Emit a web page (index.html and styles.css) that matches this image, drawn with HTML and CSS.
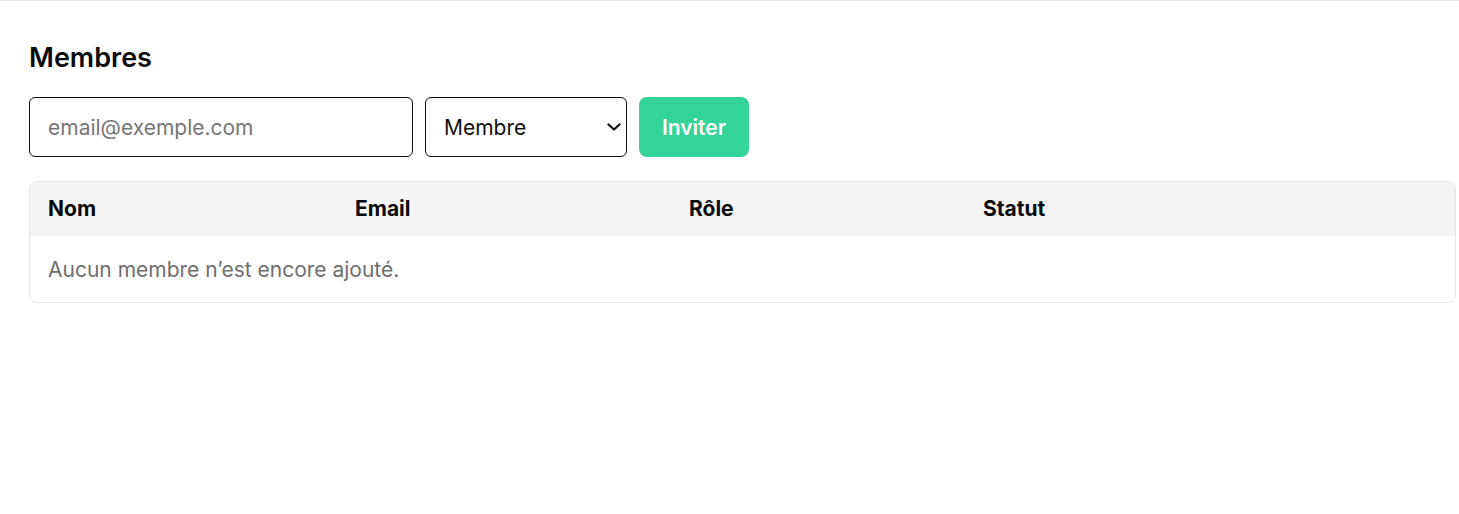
FILE: index.html
```html
<!DOCTYPE html>
<html lang="fr">
<head>
<meta charset="utf-8">
<title>Membres</title>
<link rel="stylesheet" href="styles.css">
</head>
<body>
<div class="topbar"></div>
<main class="page">
  <h2 class="title">Membres</h2>
  <form class="invite">
    <input class="email" type="email" placeholder="email@exemple.com">
    <div class="select-wrap">
      <select class="role">
        <option>Membre</option>
        <option>Admin</option>
      </select>
      <svg class="chev" width="14" height="8" viewBox="0 0 14 8" aria-hidden="true"><path d="M1.5 1.5 L7 6.5 L12.5 1.5" fill="none" stroke="#111" stroke-width="2.2" stroke-linecap="round" stroke-linejoin="round"/></svg>
    </div>
    <button class="btn" type="button">Inviter</button>
  </form>
  <div class="table-wrap">
    <table class="members">
      <thead>
        <tr>
          <th class="c-nom">Nom</th>
          <th class="c-email">Email</th>
          <th class="c-role">Rôle</th>
          <th class="c-statut">Statut</th>
        </tr>
      </thead>
      <tbody>
        <tr>
          <td class="empty" colspan="4">Aucun membre n’est encore ajouté.</td>
        </tr>
      </tbody>
    </table>
  </div>
</main>
</body>
</html>
```

FILE: styles.css
```css
* { box-sizing: border-box; }
html, body { margin: 0; padding: 0; background: #fff; }
body { font-family: Inter, "Noto Sans", sans-serif; color: #0a0a0a; }
.topbar { height: 1px; background: #e4e4e4; }
.page { padding: 41px 3px 0 29px; }
.title { margin: 0; font-size: 27px; line-height: 32px; font-weight: 600; }
.invite { display: flex; gap: 12px; margin-top: 23px; }
.email, .role, .btn { height: 60px; font-family: inherit; font-size: 21px; }
.email { width: 384px; border: 1px solid #111; border-radius: 6px; padding: 0 18px; color: #111; }
.email::placeholder { color: #777; }
.select-wrap { position: relative; width: 202px; }
.role { width: 100%; appearance: none; -webkit-appearance: none; border: 1px solid #111; border-radius: 6px; padding: 0 32px 0 18px; background: #fff; color: #111; }
.chev { position: absolute; right: 6px; top: 26px; pointer-events: none; }
.btn { width: 110px; border: 0; border-radius: 8px; background: #34d399; color: #fff; font-weight: 600; }
.table-wrap { margin-top: 24px; border: 1px solid #e5e5e5; border-radius: 8px; overflow: hidden; }
.members { width: 100%; border-collapse: collapse; }
.members th { background: #f4f4f4; text-align: left; font-size: 21px; font-weight: 700; height: 54px; padding: 0 18px 1px; }
.c-nom { width: 307px; }
.c-email { width: 334px; }
.c-role { width: 294px; }
.empty { height: 66px; padding: 0 18px; font-size: 21px; color: #6f6f6f; }
```
